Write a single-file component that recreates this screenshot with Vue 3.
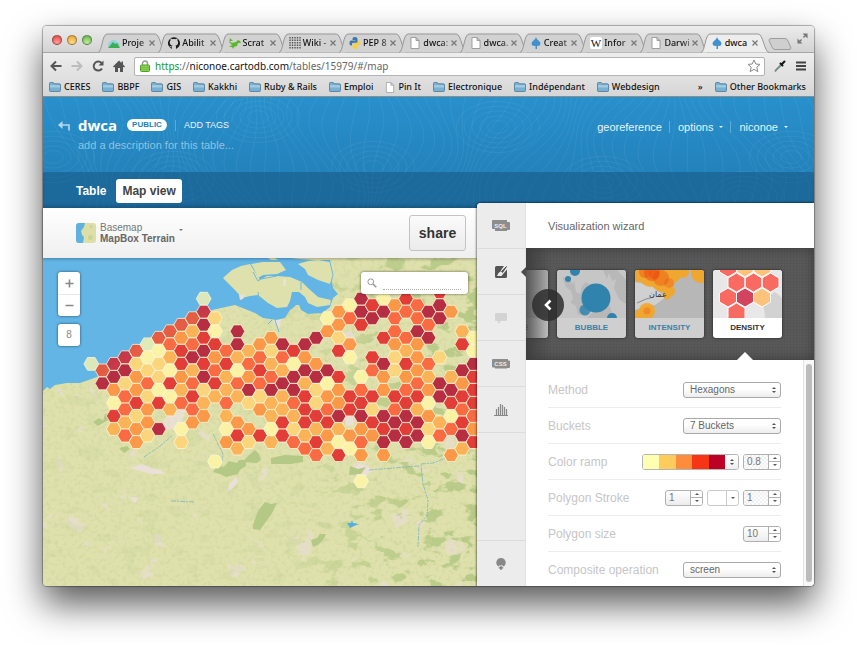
<script setup>
import { ref } from 'vue'

const tabs = [
  { icon: 'cloud', text: 'Proje' },
  { icon: 'github', text: 'Abilit' },
  { icon: 'lizard', text: 'Scrat' },
  { icon: 'grid', text: 'Wiki -' },
  { icon: 'python', text: 'PEP 8' },
  { icon: 'page', text: 'dwca:' },
  { icon: 'page', text: 'dwca.' },
  { icon: 'carto', text: 'Creat' },
  { icon: 'wiki', text: 'Infor' },
  { icon: 'page', text: 'Darwi' },
  { icon: 'carto', text: 'dwca', active: true }
]

const bookmarks = [
  { text: 'CERES' }, { text: 'BBPF' }, { text: 'GIS' }, { text: 'Kakkhi' },
  { text: 'Ruby & Rails' }, { text: 'Emploi' }, { text: 'Pin It', page: true },
  { text: 'Electronique' }, { text: 'Indépendant' }, { text: 'Webdesign' }
]

const ramp = ['#ffffb2', '#fecc5c', '#fd8d3c', '#f63516', '#bd0026']
const method = ref('Hexagons')
const buckets = ref('7 Buckets')
const composite = ref('screen')
const fillOpacity = ref('0.8')
const strokeWidth = ref('1')
const strokeOpacity = ref('1')
const size = ref('10')
const search = ref('')

// Density columns, west to east. Each entry is "half-row:bucket".
const columns = [
  '10:0',
  '11:8 13:7',
  '10:9 12:7 14:4 16:1 18:6 20:3',
  '9:9 11:7 13:2 15:5 17:5 19:3 21:5',
  '8:8 10:2 12:4 14:4 16:6 18:2 20:4 22:4',
  '7:0 9:1 11:2 13:5 15:2 17:4 19:4 21:2',
  '6:8 8:1 10:2 12:2 14:1 16:6 20:7',
  '5:8 7:5 9:3 11:1 13:6 15:1 17:3',
  '4:8 6:4 8:6 10:6 12:4 14:3 16:5 20:1 22:2',
  '3:8 5:3 7:5 9:7 11:3 13:5 15:6 17:5 19:4',
  '0:0 2:9 4:7 6:6 8:7 10:6 12:7 14:2 16:3 18:4',
  '3:2 5:1 7:6 9:4 11:5 13:6 15:3 25:1',
  '8:5 10:6 12:3 14:3 16:5 18:3 20:1 22:4',
  '5:7 7:7 9:3 11:1 13:5 15:3 19:4 21:6 23:3',
  '8:3 10:5 12:4 14:7 16:2 20:4 22:2',
  '7:4 9:5 11:6 13:5 15:2 17:4 21:6',
  '6:4 8:2 10:3 12:5 14:7 16:3 18:3 20:1 22:3',
  '7:7 9:5 11:3 13:7 15:3 17:3 19:6 21:6',
  '8:6 10:1 12:7 14:7 16:5 18:3 20:2 22:5',
  '7:7 9:4 11:7 13:3 15:6 17:6 19:6 21:3 23:5',
  '6:7 10:4 12:7 14:2 16:2 18:6 20:3 22:6 24:5',
  '3:1 5:4 11:7 13:1 15:4 17:5 19:6 21:4 23:3',
  '2:4 4:4 6:2 8:6 12:6 14:4 16:4 18:7 20:3 22:1 24:6',
  '1:1 3:5 7:4 9:1 15:6 17:6 21:4 23:1',
  '0:7 2:7 4:6 12:1 14:5 16:6 18:7 20:4 22:5 24:4 28:1',
  '1:6 3:7 9:6 11:5 15:6 17:2 19:6 21:4',
  '0:1 2:7 6:6 10:7 12:4 14:4 18:7 20:6 22:7 24:4',
  '1:4 3:5 5:5 7:4 9:2 11:2 15:6 17:5 19:7 21:7',
  '0:6 2:5 6:5 8:3 10:6 12:4 14:5 16:6 18:7 20:6 22:7',
  '1:5 3:5 5:7 7:4 9:4 11:4 13:5 15:6 17:3 19:7 21:7',
  '2:7 4:5 6:7 10:5 12:3 14:4 16:1 18:4 20:2 22:1',
  '-1:6 1:7 3:7 9:2 13:7 15:7 19:3 21:5',
  '2:4 12:3 14:7 16:6 18:1 20:5 24:4',
  '5:3 7:6 11:7 13:4 15:6 17:5 19:6 21:7 23:3',
  '6:1 8:1 10:7 12:6 14:6 16:6 18:5 20:4 22:6'
]
const buckets7 = ['#dfeab8', '#fbf4a4', '#fcd47a', '#fdb154', '#fd9645', '#fc663e', '#e23632', '#b5263d', '#e4573f', '#c73344']

function hexPoints(cx, cy, r) {
  const h = r * 0.866
  return [[r, 0], [r / 2, h], [-r / 2, h], [-r, 0], [-r / 2, -h], [r / 2, -h]]
    .map(([x, y]) => `${(cx + x).toFixed(1)},${(cy + y).toFixed(1)}`).join(' ')
}

const cells = columns.flatMap((col, i) => col.split(' ').map(e => {
  const [r, c] = e.split(':').map(Number)
  return { key: i + '-' + r, fill: buckets7[c], points: hexPoints(48.3 + 11.24 * i, 40.7 + 6.517 * r, 7.4) }
}))

// Topographic contour lines behind the header
const contours = Array.from({ length: 84 }, (_, i) => {
  let d = ''
  for (let y = -4; y <= 116; y += 6) {
    const b = i * 10
    const x = b + 16 * Math.sin(b / 62 + y / 33) + 9 * Math.sin(b / 23 - y / 19) + y * 0.3 * Math.cos(b / 140)
    d += (d ? 'L' : 'M') + x.toFixed(1) + ' ' + y
  }
  return d
})
const rings = [[10, 60], [130, 80], [215, 20], [330, 70], [455, 30], [560, 85], [700, 100], [748, 60]]
  .flatMap(([x, y]) => [8, 14, 20, 26, 32].map(r => ({ x, y, r })))
</script>

<template>
  <div class="page">
    <div class="window">
      <header class="chrome">
        <div class="tabstrip">
          <div class="lights"><i class="red"></i><i class="amber"></i><i class="green"></i></div>
          <div class="tabs">
            <div v-for="(t, i) in tabs" :key="i" class="tab" :class="{ active: t.active }">
              <svg class="tab-shape" viewBox="0 0 68 20" preserveAspectRatio="none" aria-hidden="true">
                <path d="M0 19.500C4 19.500 4 1 9 1H57C62 1 63 19.500 68 19.500" />
              </svg>
              <svg class="fav" viewBox="0 0 12 12" aria-hidden="true">
                <g v-if="t.icon === 'cloud'"><path d="M1 10a3 3 0 0 1 1-5 4 4 0 0 1 7 0 3 3 0 0 1 2 5z" fill="#8fd3de" /><path d="M0 11L5 5l2 2 2-1 3 5z" fill="#3cae55" /></g>
                <g v-else-if="t.icon === 'github'"><path d="M4 12V10.200C2.500 10.600 2 9.500 1.300 9 2.500 8.800 2.800 10 4 9.500 4 9 4.200 8.700 4.500 8.500 1 8 1.500 4.500 2.600 3.600 2.300 2.700 2.500 2 2.800 1.500 3.500 1.500 4.200 2 4.700 2.300 5.500 2 6.500 2 7.300 2.300 8 1.800 8.500 1.500 9.200 1.500 9.500 2.200 9.600 3 9.400 3.600 10.500 5 10.500 8 7.500 8.500 8 9 8 9.500 8 12A6 6 0 1 0 4 12z" fill="#1a1a1a" /></g>
                <path v-else-if="t.icon === 'lizard'" d="M1 1l3 3-4 0 3 2 4-1 2-2 2 1 1 2-3 0-1 3-3 1-1 2-1-2-3 0 3-2-3-3z" fill="#5cb82c" />
                <path v-else-if="t.icon === 'grid'" d="M1 0v12M3.500 0v12M6 0v12M8.500 0v12M11 0v12" stroke="#555" stroke-width="1.400" stroke-dasharray="1.400 1.100" />
                <g v-else-if="t.icon === 'python'"><path d="M6 0C3.500 0 3.500 1 3.500 3H6.500V3.500H2C0 3.500 0 8.500 2 8.500H3V7Q3 5.800 4.500 5.800H7.500Q8.500 5.800 8.500 4.500V2Q8.500 0 6 0z" fill="#3c76aa" /><path d="M6 12C8.500 12 8.500 11 8.500 9H5.500V8.500H10C12 8.500 12 3.500 10 3.500H9V5Q9 6.300 7.500 6.300H4.500Q3.500 6.300 3.500 7.500V10Q3.500 12 6 12z" fill="#f8cf42" /></g>
                <path v-else-if="t.icon === 'page'" d="M2 .5H7L10 3.500V11.500H2zM7 .5V3.500H10" fill="#fff" stroke="#8b8b8b" stroke-width=".8" />
                <path v-else-if="t.icon === 'carto'" d="M6 0Q6.500 2 8.500 3.500Q10.500 5 10.500 6.800Q10.300 9 8 9L7 8.800V12H5.500V8.800L4.500 9Q1.700 9 1.500 6.800Q1.500 5 3.500 3.500Q5.500 2 6 0z" fill="#3f92cf" />
                <rect v-else width="12" height="12" rx="2" fill="#fff" />
                <text v-if="t.icon === 'wiki'" x="6" y="9.500" text-anchor="middle" class="wk">W</text>
              </svg>
              <span class="tab-text">{{ t.text }}</span>
              <button class="close" aria-label="Close tab"><svg viewBox="0 0 6 6"><path d="M.5.5l5 5M5.500.5l-5 5" stroke="#777" stroke-width="1.200" /></svg></button>
            </div>
          </div>
          <button class="newtab" aria-label="New tab"><svg viewBox="0 0 24 12"><path d="M3 .5H17Q19 .5 20 3L23 10Q23 11.500 21 11.500H7Q5 11.500 4 9L1 2.500Q1 .5 3 .5z" fill="#cfcfcf" stroke="#9d9d9d" /></svg></button>
          <button class="full" aria-label="Full screen"><svg viewBox="0 0 12 12"><path d="M6 .5h5.500V6zM.5 6v5.500H6z" fill="#777" /><path d="M10 2L7 5M2 10l3-3" stroke="#777" stroke-width="1.500" /></svg></button>
        </div>
        <div class="toolbar">
          <button class="nav" aria-label="Back"><svg viewBox="0 0 12 12"><path d="M11.500 6H2M6 1.500L1.500 6 6 10.500" fill="none" stroke="#555" stroke-width="2" /></svg></button>
          <button class="nav" aria-label="Forward"><svg viewBox="0 0 12 12"><path d="M.5 6H10M6 1.500L10.500 6 6 10.500" fill="none" stroke="#bdbdbd" stroke-width="2" /></svg></button>
          <button class="nav" aria-label="Reload"><svg viewBox="0 0 12 12"><path d="M10 8.500A4.500 4.500 0 1 1 9.500 3" fill="none" stroke="#555" stroke-width="2" /><path d="M11.500.5V5.500H6.500z" fill="#555" /></svg></button>
          <button class="nav" aria-label="Home"><svg viewBox="0 0 12 12"><path d="M6 .5L0 6.500 1 7.500 2 6.800V12H5V8H7V12H10V6.800L11 7.500 12 6.500 10 4.500V1.500H8.500V3z" fill="#555" /></svg></button>
          <div class="omnibox">
            <svg class="lock" viewBox="0 0 10 12"><path d="M2.500 5.500V3.500a2.500 2.500 0 0 1 5 0V5.500" fill="none" stroke="#999" stroke-width="1.400" /><rect x=".5" y="5" width="9" height="6.500" rx="1" fill="#8fd05a" stroke="#4ea024" /><path d="M1 7.500H9M1 9.500H9" stroke="#68b43a" stroke-width=".7" /></svg>
            <p class="url"><span class="secure">https</span>://<b>niconoe.cartodb.com</b>/tables/15979/#/map</p>
            <svg class="star" viewBox="0 0 14 14"><path d="M7 1l1.800 4 4.200.4-3.200 2.900 1 4.300L7 10.300 3.200 12.600l1-4.300L1 5.400 5.200 5z" fill="#fff" stroke="#888" /></svg>
          </div>
          <button class="nav" aria-label="Colour picker"><svg viewBox="0 0 12 12"><path d="M7.500 4.500L2 10 1 11.500" fill="none" stroke="#6f8d80" stroke-width="1.800" /><path d="M6.500 3.500l2 2M8 4L10.500 1.500" stroke="#151515" stroke-width="2" stroke-linecap="round" /></svg></button>
          <button class="nav" aria-label="Menu"><svg viewBox="0 0 12 12"><path d="M1 2.500H11M1 6H11M1 9.500H11" stroke="#444" stroke-width="2" /></svg></button>
        </div>
        <nav class="bookmarks">
          <a v-for="b in bookmarks" :key="b.text" href="#">
            <svg v-if="b.page" class="leaf" viewBox="0 0 10 12"><path d="M1 .5H6L9 3.500V11.500H1zM6 .5V3.500H9" fill="#fff" stroke="#999" stroke-width=".8" /></svg>
            <svg v-else viewBox="0 0 13 11"><path d="M.5 9.500V1.500Q.5.5 1.500.5H4.500L5.500 2H11.500Q12.500 2 12.500 3V9.500Q12.500 10.500 11.500 10.500H1.500Q.5 10.500.5 9.500z" fill="#77b1d3" stroke="#55809c" /><path d="M1 3.500H12V6H1z" fill="#a5cce3" /></svg>
            {{ b.text }}
          </a>
          <span class="more">»</span>
          <a class="other" href="#">
            <svg viewBox="0 0 13 11"><path d="M.5 9.500V1.500Q.5.5 1.500.5H4.500L5.500 2H11.500Q12.500 2 12.500 3V9.500Q12.500 10.500 11.500 10.500H1.500Q.5 10.500.5 9.500z" fill="#77b1d3" stroke="#55809c" /><path d="M1 3.500H12V6H1z" fill="#a5cce3" /></svg>
            Other Bookmarks
          </a>
        </nav>
      </header>

      <section class="hero">
        <svg class="contours" viewBox="0 0 771 111" preserveAspectRatio="xMidYMid slice" aria-hidden="true">
          <path v-for="(d, i) in contours" :key="i" :d="d" />
          <ellipse v-for="(c, i) in rings" :key="'r' + i" :cx="c.x" :cy="c.y" :rx="c.r * 1.3" :ry="c.r * 0.8" />
        </svg>
        <div class="hero-top">
          <a href="#" class="back" aria-label="Back to tables"><svg viewBox="0 0 12 10"><path d="M11 9.500V4H2" fill="none" stroke="#b5d8ee" stroke-width="1.600" /><path d="M4.500 0V8L0 4z" fill="#b5d8ee" /></svg></a>
          <div class="title">
            <div class="title-row">
              <h1>dwca</h1><span class="pill">PUBLIC</span><a href="#" class="tags">ADD TAGS</a>
            </div>
            <p>add a description for this table...</p>
          </div>
          <nav class="user">
            <a href="#">georeference</a>
            <a href="#">options<i class="caret"></i></a>
            <a href="#">niconoe<i class="caret"></i></a>
          </nav>
        </div>
        <nav class="views"><a href="#">Table</a><a href="#" class="on">Map view</a></nav>
      </section>

      <main class="work">
        <section class="left">
          <div class="mapbar">
            <button class="basemap">
              <svg viewBox="0 0 20 20"><rect width="20" height="20" rx="3" fill="#dcdfa6" /><path d="M3 0H9L8 4 5 8 6 12 8 14 7 20H3Q0 20 0 17V3Q0 0 3 0z" fill="#5fb1e0" /><path d="M13 2l4 1-2 3zM12 13l4-1 1 4-4 1z" fill="#cdd294" /></svg>
              <span class="bm"><span>Basemap</span><b>MapBox Terrain</b></span>
              <i class="caret dark"></i>
            </button>
            <button class="share">share</button>
          </div>
          <div class="map">
            <svg class="canvas" viewBox="0 0 434 328" preserveAspectRatio="xMinYMin slice" role="img" aria-label="Hexagon density map of Belgium">
              <defs>
                <filter id="woods" x="0" y="0" width="100%" height="100%" color-interpolation-filters="sRGB">
                  <feTurbulence type="fractalNoise" baseFrequency="0.05 0.08" numOctaves="5" seed="8" />
                  <feColorMatrix values="0 0 0 0 .68  0 0 0 0 .77  0 0 0 0 .49  12 0 0 0 -6.9" />
                  <feComposite in2="SourceGraphic" operator="in" />
                </filter>
                <filter id="towns" x="0" y="0" width="100%" height="100%" color-interpolation-filters="sRGB">
                  <feTurbulence type="fractalNoise" baseFrequency="0.04" numOctaves="4" seed="21" />
                  <feColorMatrix values="0 0 0 0 .91  0 0 0 0 .87  0 0 0 0 .82  0 12 0 0 -8.2" />
                  <feComposite in2="SourceGraphic" operator="in" />
                </filter>
                <filter id="grain" x="0" y="0" width="100%" height="100%" color-interpolation-filters="sRGB">
                  <feTurbulence type="fractalNoise" baseFrequency="0.25" numOctaves="2" seed="4" />
                  <feColorMatrix values="0 0 0 0 .79  0 0 0 0 .80  0 0 0 0 .56  0 5 0 0 -2.5" />
                  <feComposite in2="SourceGraphic" operator="in" />
                </filter>
                <linearGradient id="fade">
                  <stop offset=".55" stop-color="#fff" stop-opacity=".12" />
                  <stop offset=".8" stop-color="#fff" stop-opacity=".65" />
                  <stop offset="1" stop-color="#fff" stop-opacity=".8" />
                </linearGradient>
                <mask id="eastward"><rect width="434" height="328" fill="url(#fade)" /></mask>
                <clipPath id="shore">
                  <path d="M0 133L4 129 7 131 12 127 24 125 37 125 54 119 77 100 100 84 120 72 147 57 169 52 192 47 212 55 220 60 233 62 242 60 247 52 250 50 253 47 256 47 258 52 265 56 279 55 287 49 290 40 295 36 290 30 288 17 287 0H434V328H0z" />
                </clipPath>
              </defs>
              <rect width="434" height="328" fill="#63b5e6" />
              <g clip-path="url(#shore)">
                <rect width="434" height="328" fill="#dfe1ad" />
                <rect width="434" height="328" filter="url(#grain)" opacity=".3" />
                <rect y="90" width="434" height="238" filter="url(#towns)" opacity=".7" />
                <g mask="url(#eastward)"><rect width="434" height="328" filter="url(#woods)" /></g>
              </g>
              <g fill="#dfe1ad">
                <path d="M180 20L189 12 198 8 207 6 212 14 217 22 224 18 234 18 247 19 259 24 265 30 275 39 288 42 287 47 274 49 265 45 262 39 256 34 249 34 247 43 244 49 234 50 225 45 215 37 207 38 199 40 192 32z" />
                <path d="M208 6L220 4 237 4 243 12 234 16 220 17 215 20 211 11z" />
                <path d="M255 6L265 3 275 2 287 4 290 17 287 26 275 22 265 17 262 11z" />
                <path d="M225 0H232L235 2 228 2zM248 0H290V2L270 2 256 1z" />
              </g>
              <g fill="#ebe0d8">
                <path d="M117 169l5-9 8-6 4-4 10-3-2 8-3 8-8 8-9 1z" opacity=".8" /><path d="M87 210l12-4 9 4 10 2 4 4-14 0-11-3z" /><path d="M310 212l6-6 7 2 8 4-6 4-3 4-8-2z" /><path d="M186 226l8-8 1 6-5 6-5 3z" /><path d="M300 75l8-3 5 9-3 9-8 8-4-11z" opacity=".8" /><path d="M302 158l8 1 1 8-8 1z" /><path d="M85 238l11 2-4 5z" /><path d="M196 37l6-1-2 5-3 1zM240 21h3v7h-3zM230 62h8l-2 10z" />
              </g>
              <g fill="#b3c985">
                <path d="M170 214l4-6 7 1 5-6 8 2 2-3 7 0 0 6-6 4-2 4-12 3-6-3z" /><path d="M210 267l5-14 7-9 6 2 6-1-6 12-6 8-5 7-7-1z" /><path d="M200 203l6-6 6-5 4 4 2 6-4 3-14-1zM228 200l14-3 18 1 0 6-12 2-20 0z" /><path d="M50 164l6-4 4 3 2-7 6-1-1 6-7 4-5 3zM76 190l8-2 3 3-6 4z" /><path d="M268 282l6-2 3-4 6 0-3 6-5 5-5 2zM307 208l8 3 8-2-5 7-12 1z" />
              </g>
              <path d="M434 188l-20 8-24 9-12 1 2 20 5 16-1 16-8 9-1 22M101 199l15-10 14-12M170 176l10 20-1 8M128 243l24 1M326 212l50-4" fill="none" stroke="#7fb5c2" stroke-width=".8" stroke-dasharray="5 1 2 1" />
              <path d="M304 265l4 0 1-3 1 3 6 1-5 2-4 2-1-2z" fill="#58ade0" />
              <path d="M210 14l5 9 3-2 16-3M287 4l3 13-3 12 1 14M258 24l0 8M215 34l1 8M232 62l4 12M225 66l4-4" fill="none" stroke="#75b8d8" />
              <g class="hexes"><polygon v-for="c in cells" :key="c.key" :points="c.points" :fill="c.fill" /></g>
            </svg>
            <div class="zoom">
              <div class="pair"><button aria-label="Zoom in"><svg viewBox="0 0 9 9"><path d="M4.500 0.500V8.500M.5 4.500H8.500" /></svg></button><button aria-label="Zoom out"><svg viewBox="0 0 9 9"><path d="M.5 4.500H8.500" /></svg></button></div>
              <output>8</output>
            </div>
            <label class="search">
              <svg viewBox="0 0 10 10"><circle cx="3.800" cy="3.800" r="2.900" fill="none" stroke="#999" stroke-width="1" /><path d="M6 6l3.300 3.300" stroke="#999" stroke-width="1.600" /></svg>
              <input v-model="search" aria-label="Search map">
            </label>
          </div>
        </section>

        <aside class="panel">
          <nav class="rail">
            <button aria-label="SQL"><svg viewBox="0 0 18 12"><path d="M1 0H15V2H17Q18 2 18 3V9Q18 10 17 10H15V11H3V9H1Q0 9 0 8V1Q0 0 1 0z" fill="#8d8d8d" /><text x="8.500" y="7.500" text-anchor="middle">SQL</text></svg></button>
            <button class="current" aria-label="Wizards"><svg viewBox="0 0 12 12"><path d="M1.500 0H9L6.500 3.500 5.500 5.500 3.500 7 2 10H6.500L8.500 7.500 12 3.500V10.500Q12 12 10.500 12H1.500Q0 12 0 10.500V1.500Q0 0 1.500 0z" fill="#555" /><path d="M11.500.5L6.500 5.500 7.500 6.500z" fill="#555" stroke="#555" /></svg></button>
            <button aria-label="Infowindow"><svg viewBox="0 0 12 12"><path d="M1 1H11Q12 1 12 2V8Q12 9 11 9H6L3 12V9H1Q0 9 0 8V2Q0 1 1 1z" fill="#d3d3d3" /></svg></button>
            <button aria-label="CSS"><svg viewBox="0 0 18 12"><path d="M1 1H16V2.500H17Q18 2.500 18 3.500V9Q18 10 17 10H15V10.500H3V9.500H1Q0 9.500 0 8.500V2Q0 1 1 1z" fill="#8d8d8d" /><text x="8.500" y="8" text-anchor="middle">CSS</text></svg></button>
            <button aria-label="Legends"><svg viewBox="0 0 14 12"><path d="M0 11.500H14M2.500 11V5M4.500 11V3M6.500 11V0M8.500 11V1M10.500 11V3M12.500 11V5" stroke="#888" stroke-width="1.200" /></svg></button>
            <button class="last" aria-label="Add feature"><svg viewBox="0 0 12 12"><path d="M6 0a4.700 4.700 0 0 1 3 8.300H7.500V7H4.500V8.300H3A4.700 4.700 0 0 1 6 0z" fill="#888" /><path d="M6 7.500V12M3.800 9.800H8.200" stroke="#777" stroke-width="1.300" /></svg></button>
          </nav>
          <div class="detail">
            <h2>Visualization wizard</h2>
            <div class="carousel">
              <div class="cards">
                <button class="card dim"><svg viewBox="0 0 69 48"><rect width="69" height="48" fill="#b9b9b9" /></svg><span>SIMPLE</span></button>
                <button class="card dim">
                  <svg viewBox="0 0 69 48"><rect width="69" height="48" fill="#c6c6c6" /><path d="M5 6l5 4 2-3 4 8 1-5 2 12 4 2 2-8 4-4 3 2-5 8-1 8 5 5-3 8-7 2-2-9-6-4 3-3-2-8-5-4zM46 0l4 9 2-6 3 8 4-2-2 9 5 11 7 5V10L60 0zM38 40l14-6 5 14H30z" fill="#b8b8b8" /><g fill="#2f83ad"><circle cx="18" cy="1" r="5" /><circle cx="11" cy="9" r="3" /><circle cx="39" cy="28" r="14.500" /><circle cx="28" cy="40" r="5.500" opacity=".85" /><circle cx="55" cy="48" r="5" /></g></svg>
                  <span>BUBBLE</span>
                </button>
                <button class="card dim">
                  <svg viewBox="0 0 69 48"><rect width="69" height="48" fill="#b7b7b7" /><path d="M0 12l15 3 16 12-11 8-15 3-5 2z" fill="#d0d0d0" /><g fill="#f5a623" opacity=".9"><circle cx="4" cy="3" r="9" /><circle cx="15" cy="7" r="10" /><circle cx="28" cy="10" r="12" /><circle cx="34" cy="21" r="6" /><circle cx="37" cy="4" r="9" /><circle cx="48" cy="2" r="6" /><circle cx="66" cy="3" r="10" /><circle cx="12" cy="41" r="8" /><circle cx="3" cy="46" r="6" /><circle cx="32" cy="26" r="3.500" /></g><g fill="#ee4a10"><circle cx="10" cy="2" r="6" opacity=".4" /><circle cx="17" cy="3" r="8" opacity=".5" /><circle cx="19" cy="4" r="5" opacity=".5" /><circle cx="26" cy="8" r="8" opacity=".4" /><circle cx="34" cy="13" r="5" opacity=".3" /><circle cx="12" cy="41" r="3.500" opacity=".3" /></g><path d="M2 33l9-4 8-2" fill="none" stroke="#777" stroke-width=".8" /><text x="14" y="27" class="arab">عمان</text></svg>
                  <span>INTENSITY</span>
                </button>
                <button class="card chosen">
                  <svg viewBox="0 0 69 48"><rect width="69" height="48" fill="#e8e8e8" /><path d="M50 30l12-8 7 6v20H52z" fill="#d2d2d2" /><g stroke="#fff" stroke-width="1"><path d="M6.500-4H23.500V2L15 7 6.500 2z" fill="#f96a60" /><path d="M24-4H40V2L32 7 24 2z" fill="#fdc27c" /><path d="M41-4H58V2L49 7 41 2z" fill="#fdc27c" /><path d="M15 8L23.500 3 32 8V17L23.500 22 15 17zM32 8L40.500 3 49 8V17L40.500 22 32 17zM49 8L57.500 3 66 8V17L57.500 22 49 17zM6.500 23L15 18 23.500 23V32L15 37 6.500 32zM15 38L23.500 33 32 38V52H15z" fill="#f96a60" /><path d="M23.500 23L32 18 40.500 23V32L32 37 23.500 32z" fill="#d1435f" /><path d="M40.500 23L49 18 57.500 23V32L49 37 40.500 32z" fill="#fdc27c" /></g></svg>
                  <span>DENSITY</span>
                </button>
              </div>
              <div class="shade"></div>
              <button class="prev" aria-label="Previous"><svg viewBox="0 0 8 12"><path d="M6.500 1.500L2 6l4.500 4.500" fill="none" stroke="#fff" stroke-width="2.600" /></svg></button>
            </div>
            <div class="scroller">
              <form class="form" @submit.prevent>
                <div class="row">
                  <label for="method">Method</label>
                  <div class="pick"><select id="method" v-model="method"><option>Hexagons</option><option>Rectangles</option></select><i class="updown"></i></div>
                </div>
                <div class="row">
                  <label for="buckets">Buckets</label>
                  <div class="pick"><select id="buckets" v-model="buckets"><option>5 Buckets</option><option>7 Buckets</option></select><i class="updown"></i></div>
                </div>
                <div class="row">
                  <label for="opacity">Color ramp</label>
                  <button type="button" class="ramp" aria-label="Color ramp"><i v-for="c in ramp" :key="c" :style="{ background: c }"></i><span class="grip"><i class="updown"></i></span></button>
                  <div class="num checks"><input id="opacity" v-model="fillOpacity"><span><button type="button" aria-label="Increase"><i class="up"></i></button><button type="button" aria-label="Decrease"><i class="down"></i></button></span></div>
                </div>
                <div class="row">
                  <label for="stroke">Polygon Stroke</label>
                  <div class="num"><input id="stroke" v-model="strokeWidth"><span><button type="button" aria-label="Increase"><i class="up"></i></button><button type="button" aria-label="Decrease"><i class="down"></i></button></span></div>
                  <button type="button" class="colour" aria-label="Stroke color"><span><i class="down"></i></span></button>
                  <div class="num checks"><input v-model="strokeOpacity" aria-label="Stroke opacity"><span><button type="button" aria-label="Increase"><i class="up"></i></button><button type="button" aria-label="Decrease"><i class="down"></i></button></span></div>
                </div>
                <div class="row">
                  <label for="size">Polygon size</label>
                  <div class="num"><input id="size" v-model="size"><span><button type="button" aria-label="Increase"><i class="up"></i></button><button type="button" aria-label="Decrease"><i class="down"></i></button></span></div>
                </div>
                <div class="row">
                  <label for="composite">Composite operation</label>
                  <div class="pick"><select id="composite" v-model="composite"><option>screen</option><option>multiply</option></select><i class="updown"></i></div>
                </div>
              </form>
              <div class="track"><i></i></div>
            </div>
          </div>
        </aside>
      </main>
    </div>
  </div>
</template>

<style>
body { background: #fff; }
</style>

<style scoped>
* { box-sizing: border-box; }
button, input, select { font: inherit; color: inherit; margin: 0; padding: 0; border: 0; background: none; }
a { color: inherit; text-decoration: none; }
h1, h2, p { margin: 0; }
svg { display: block; }
.page { height: 100vh; min-height: 500px; padding: 26px 43px 59px; display: flex; overflow: hidden; font: 11px/14px "Liberation Sans", Arial, sans-serif; color: #666; }
.window { flex: 1; min-width: 0; display: flex; flex-direction: column; border-radius: 4px; box-shadow: 0 18px 36px rgba(0, 0, 0, .66), 0 0 1px 1px rgba(0, 0, 0, .3); background: #fff; }

.chrome { height: 71px; flex: none; border-radius: 4px 4px 0 0; background: linear-gradient(#ececec, #d2d2d2 27px, #ededed 27px, #d6d6d6); border-bottom: 1px solid #8d8d8d; font: 9px/14px "Noto Sans", "Open Sans", sans-serif; color: #111; }
.tabstrip { height: 27px; display: flex; align-items: flex-end; padding: 0 6px 0 9px; border-bottom: 1px solid #a5a5a5; }
.lights { display: flex; gap: 5px; width: 46px; height: 17px; }
.lights i { width: 10px; height: 10px; border-radius: 50%; border: 1px solid rgba(0, 0, 0, .35); flex: none; }
.red { background: radial-gradient(circle at 50% 80%, #ff9d98, #e0443f); }
.amber { background: radial-gradient(circle at 50% 80%, #ffdf8c, #e9962c); }
.green { background: radial-gradient(circle at 50% 80%, #c0eb9c, #5fae47); }
.tabs { flex: 1; min-width: 0; display: flex; height: 20px; margin-bottom: -1px; }
.tab { position: relative; flex: 1; min-width: 0; height: 20px; display: flex; align-items: center; padding: 0 1px 0 10px; gap: 1px; }
.tab.active { z-index: 1; }
.tab-shape { position: absolute; left: 0; top: 0; width: calc(100% + 8px); height: 20px; overflow: visible; }
.tab-shape path { fill: #d2d2d2; stroke: #979797; vector-effect: non-scaling-stroke; }
.active .tab-shape path { fill: #ededed; }
.fav { position: relative; width: 12px; height: 12px; flex: none; }
.wk { font: 11px "Liberation Serif", serif; fill: #111; }
.tab-text { position: relative; flex: 1; white-space: nowrap; font-weight: 500; padding-left: 1px; mask-image: linear-gradient(90deg, #000 65%, rgba(0, 0, 0, .4)); }
.active .tab-text { mask-image: none; }
.close { position: relative; width: 6px; height: 6px; flex: none; margin-right: 2px; }
.newtab { width: 24px; margin: 0 5px 2px 7px; }
.full { width: 11px; margin-bottom: 8px; }
.toolbar { height: 26px; display: flex; align-items: center; gap: 9px; padding: 0 7px; }
.nav { width: 12px; height: 12px; flex: none; }
.omnibox { flex: 1; min-width: 0; height: 19px; display: flex; align-items: center; gap: 5px; padding: 0 3px 0 5px; background: #fff; border: 1px solid #b3b3b3; border-radius: 2px; }
.lock { width: 10px; height: 12px; flex: none; }
.url { flex: 1; font-size: 10px; color: #666; white-space: nowrap; overflow: hidden; }
.url b { font-weight: 400; color: #111; }
.secure { color: #139a2b; }
.star { width: 14px; height: 14px; flex: none; }
.bookmarks { height: 16px; display: flex; align-items: center; padding: 0 8px 0 6px; gap: 12px; font-weight: 500; white-space: nowrap; }
.bookmarks a { display: flex; align-items: center; gap: 3px; }
.bookmarks svg { width: 12px; height: 10px; }
.bookmarks .leaf { width: 10px; height: 11px; }
.more { margin-left: auto; }

.hero { position: relative; flex: none; color: #fff; background: linear-gradient(#2890cc, #2382bb 75px); overflow: hidden; }
.contours { position: absolute; inset: 0; width: 100%; height: 100%; }
.contours path, .contours ellipse { fill: none; stroke: #fff; stroke-opacity: .06; }
.hero-top { position: relative; height: 75px; display: flex; align-items: flex-start; padding: 18px 26px 0 15px; }
.back { width: 12px; margin: 6px 8px 0 0; }
.title { flex: 1; min-width: 0; }
.title-row { display: flex; align-items: center; height: 20px; }
h1 { font: 700 15px/20px "Open Sans", sans-serif; }
.pill { margin-left: 10px; padding: 0 5px; border-radius: 6px; background: #fff; color: #2382bb; font-size: 8px; font-weight: 700; line-height: 12px; }
.tags { margin-left: 8px; padding-left: 8px; border-left: 1px solid #5cacd9; font-size: 9px; line-height: 11px; color: #e4f2fa; }
.title p { margin-top: 3px; color: #8cc3e3; }
.user { display: flex; align-items: center; margin-top: 6px; color: #e6f3fa; }
.user a { line-height: 12px; display: flex; align-items: center; }
.user a + a { border-left: 1px solid #5cacd9; margin-left: 7px; padding-left: 8px; }
.caret { border: 2px solid transparent; border-top-color: currentColor; border-bottom: 0; margin-left: 6px; }
.caret.dark { align-self: flex-start; margin: 7px 0 0; }
.views { position: relative; height: 36px; display: flex; align-items: center; gap: 10px; padding-left: 33px; background: rgba(20, 75, 120, .45); border-top: 1px solid #1d6c9f; box-shadow: inset 0 -3px 3px rgba(0, 0, 0, .12); font-size: 12px; font-weight: 700; }
.views .on { padding: 0 6px; line-height: 24px; background: #fff; border-radius: 3px; color: #444; }

.work { flex: 1; min-height: 0; display: flex; }
.left { flex: 1; min-width: 0; display: flex; flex-direction: column; }
.mapbar { position: relative; height: 50px; flex: none; display: flex; align-items: center; justify-content: space-between; padding: 0 11px 0 33px; background: linear-gradient(#fff, #efefef); box-shadow: 0 1px 3px rgba(0, 0, 0, .3); z-index: 1; }
.basemap { display: flex; align-items: center; gap: 4px; text-align: left; font-size: 10px; line-height: 11px; color: #777; }
.basemap svg { width: 20px; height: 20px; }
.bm { display: flex; flex-direction: column; }
.bm b { color: #666; }
.share { width: 57px; height: 36px; border: 1px solid #c3c3c3; border-radius: 3px; background: linear-gradient(#fbfbfb, #ebebeb); color: #333; font-size: 14px; font-weight: 700; }
.map { position: relative; flex: 1; min-height: 0; overflow: hidden; border-radius: 0 0 0 4px; }
.canvas { position: absolute; inset: 0; width: 100%; height: 100%; }
.hexes polygon { stroke: #fff6d8; stroke-opacity: .85; stroke-width: .9; fill-opacity: .96; }
.zoom { position: absolute; left: 15px; top: 14px; width: 22px; display: flex; flex-direction: column; gap: 8px; }
.pair, .zoom output, .search { background: #fff; border-radius: 3px; box-shadow: 0 0 3px rgba(0, 0, 0, .6); }
.pair button { width: 22px; height: 22px; display: grid; place-items: center; }
.pair button + button { border-top: 1px solid #e8e8e8; }
.pair svg { width: 9px; height: 9px; fill: none; stroke: #888; stroke-width: 1.600; }
.zoom output { height: 22px; font-size: 10px; line-height: 22px; text-align: center; color: #888; }
.search { position: absolute; right: 9px; top: 14px; width: 107px; height: 22px; display: flex; align-items: center; gap: 6px; padding: 0 7px 0 6px; }
.search svg { width: 10px; height: 10px; flex: none; }
.search input { flex: 1; min-width: 0; height: 14px; border-bottom: 1px dotted #aaa; outline: 0; }

.panel { position: relative; z-index: 2; width: 337px; flex: none; margin-top: -5px; display: flex; background: #fff; border-radius: 4px 0 4px 0; box-shadow: 0 0 2px 1px rgba(0, 0, 0, .45); clip-path: inset(-4px 0 0 -4px); }
.rail { width: 49px; flex: none; display: flex; flex-direction: column; background: #ececec; border-radius: 4px 0 0; border-right: 1px solid #e2e2e2; }
.rail button { position: relative; height: 46px; display: grid; place-items: center; border-bottom: 1px solid #dcdcdc; }
.rail svg { height: 12px; }
.rail text { font: 700 6px "Liberation Sans", sans-serif; fill: #ececec; }
.rail .last { margin-top: auto; border: 0; border-top: 1px solid #dcdcdc; }
.current::after { content: ""; position: absolute; right: -1px; top: 18px; border: 5px solid transparent; border-right-color: #4c4c4c; border-left: 0; }
.detail { flex: 1; min-width: 0; display: flex; flex-direction: column; }
h2 { height: 45px; flex: none; padding-left: 22px; font-size: 11px; font-weight: 400; line-height: 46px; color: #666; }
.carousel { position: relative; height: 112px; flex: none; overflow: hidden; background: repeating-linear-gradient(90deg, rgba(0, 0, 0, .03) 0 1px, transparent 1px 3px), repeating-linear-gradient(rgba(0, 0, 0, .03) 0 1px, transparent 1px 3px), #595959; box-shadow: inset 0 0 12px rgba(0, 0, 0, .35); }
.cards { display: flex; justify-content: flex-end; gap: 9px; padding: 22px 32px 0 0; }
.card { position: relative; width: 69px; height: 68px; flex: none; border-radius: 3px; background: #fff; box-shadow: 0 0 3px rgba(0, 0, 0, .6); font-size: 8px; font-weight: 700; color: #333; }
.card svg { width: 69px; height: 48px; border-radius: 3px 3px 0 0; }
.card span { display: block; height: 20px; line-height: 20px; }
.dim { background: #cfcfcf; color: #3d7fa5; }
.chosen::after { content: ""; position: absolute; left: 24px; bottom: -22px; border: 8px solid transparent; border-bottom: 8px solid #fff; border-top: 0; }
.arab { font: 8px "DejaVu Sans", sans-serif; fill: #333; }
.shade { position: absolute; left: 0; top: 0; bottom: 0; width: 26px; background: linear-gradient(90deg, rgba(60, 60, 60, .8), rgba(70, 70, 70, 0)); }
.prev { position: absolute; left: 6px; top: 41px; width: 32px; height: 32px; border-radius: 50%; background: rgba(45, 45, 45, .85); display: grid; place-items: center; }
.prev svg { width: 8px; height: 12px; }
.scroller { flex: 1; min-height: 0; display: flex; overflow: hidden; border-radius: 0 0 4px 0; }
.form { flex: 1; min-width: 0; padding: 12px 22px 0 22px; }
.row { height: 36px; display: flex; align-items: center; gap: 4px; border-bottom: 1px solid #ececec; font-size: 10px; color: #666; }
.row:last-child { border: 0; }
.row label { flex: 1; font-size: 12px; color: #c6c6c6; white-space: nowrap; }
.track { width: 11px; border-left: 1px solid #e3e3e3; background: #f8f8f8; padding: 4px 2px 4px; display: flex; }
.track i { flex: 1; border-radius: 4px; background: #bcbcbc; }
.pick { display: grid; align-items: center; width: 98px; }
.pick > * { grid-area: 1 / 1; }
.pick select { appearance: none; height: 16px; padding: 0 6px; border: 1px solid #a9a9a9; border-radius: 3px; background: linear-gradient(#fff 40%, #ededed); }
.pick .updown { justify-self: end; margin-right: 5px; pointer-events: none; }
.updown { display: flex; flex-direction: column; gap: 2px; width: 4px; }
.updown::before { content: ""; border: 2px solid transparent; border-bottom-color: #555; border-top: 0; }
.updown::after { content: ""; border: 2px solid transparent; border-top-color: #555; border-bottom: 0; }
.ramp { display: flex; width: 97px; height: 16px; border: 1px solid #b5b5b5; border-radius: 3px; overflow: hidden; }
.ramp > i { flex: 1; height: 100%; }
.grip { width: 13px; height: 100%; display: grid; place-items: center; background: linear-gradient(#fff, #eee); }
.num { display: flex; width: 38px; height: 16px; border: 1px solid #b0b0b0; border-radius: 3px; background: linear-gradient(#fff, #ececec); overflow: hidden; }
.num input { flex: 1; min-width: 0; padding-left: 3px; color: #777; }
.checks input { background: repeating-conic-gradient(#f0f0f0 0 25%, #fdfdfd 0 50%) 0 0 / 4px 4px; }
.num span { width: 12px; display: flex; flex-direction: column; border-left: 1px solid #b0b0b0; background: #fff; }
.num button { flex: 1; display: grid; place-items: center; }
.num button + button { border-top: 1px solid #b0b0b0; }
.up { border: 2px solid transparent; border-bottom-color: #555; border-top: 0; }
.down { border: 2px solid transparent; border-top-color: #555; border-bottom: 0; }
.colour { display: flex; justify-content: flex-end; width: 32px; height: 16px; border: 1px solid #c9c9c9; border-radius: 3px; }
.colour span { width: 12px; height: 100%; display: grid; place-items: center; border-left: 1px solid #c9c9c9; }
</style>
